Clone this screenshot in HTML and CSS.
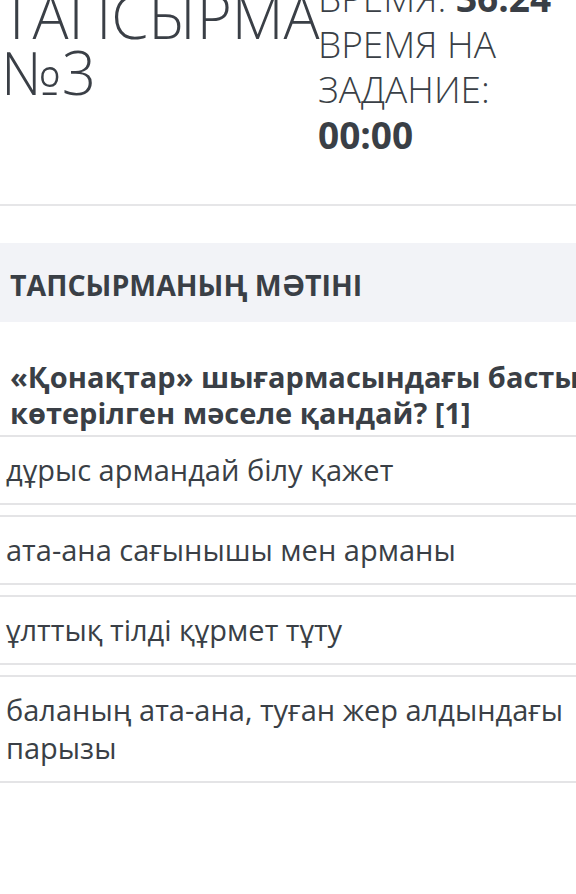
FILE: index.html
```html
<!DOCTYPE html>
<html>
    <head>
        <meta charset="UTF-8">
        <title>Тапсырма №3</title>
        <link rel="stylesheet" href="styles.css">
    </head>

    <body>
        <div class="page">
            <div class="task-header">
                <h1 class="task-title">ТАПСЫРМА №3</h1>
                <div class="timer">
                    <div>ВРЕМЯ: <b>36:24</b></div>
                    <div>ВРЕМЯ НА ЗАДАНИЕ: <b>00:00</b></div>
                </div>
            </div>

            <div class="section-title">ТАПСЫРМАНЫҢ МӘТІНІ</div>

            <div class="question">
                «Қонақтар» шығармасындағы басты кейіпкер арқылы көтерілген мәселе қандай? [1]
            </div>

            <ul class="answers">
                <li class="answer">дұрыс армандай білу қажет</li>
                <li class="answer">ата-ана сағынышы мен арманы</li>
                <li class="answer">ұлттық тілді құрмет тұту</li>
                <li class="answer">баланың ата-ана, туған жер алдындағы парызы</li>
            </ul>
        </div>
    </body>
</html>
```

FILE: styles.css
```css
*, *::after, *::before {
    box-sizing: border-box;
}

body {
    margin: 0;
    font-family: 'Open Sans', 'DejaVu Sans', sans-serif;
    color: #3a3f46;
    background-color: white;
    overflow: hidden;
}

.page {
    margin-top: -25px; /* страница прокручена немного вниз */
}

.task-header {
    display: flex;
    align-items: flex-start;
    padding-bottom: 47px;
    border-bottom: 2px solid #e6e6e8;
}

.task-title {
    margin: 13px 0 0 0;
    padding-left: 1px;
    width: 318px;
    flex-shrink: 0;
    font-size: 60px;
    line-height: 56px;
    font-weight: 300;
}

.timer {
    font-size: 37px;
    line-height: 45.5px;
    font-weight: 300;
    width: 258px;
}

.timer b {
    font-weight: 700;
}

.section-title {
    margin-top: 37px;
    height: 79px;
    padding: 4px 10px 0 10px;
    display: flex;
    align-items: center;
    background-color: #f2f3f7;
    font-size: 28.5px;
    font-weight: 700;
}

/* вопрос шире экрана, его конец обрезан справа */
.question {
    width: 900px;
    padding: 37px 10px 4px 10px;
    font-size: 29px;
    line-height: 36px;
    font-weight: 700;
}

.answers {
    list-style: none;
    margin: 0;
    padding: 0;
    width: 576px;
    display: flex;
    flex-direction: column;
    gap: 10px;
}

.answer {
    padding: 14px 6px;
    border-top: 2px solid #e4e4e6;
    border-bottom: 2px solid #e4e4e6;
    font-size: 29px;
    line-height: 38px;
}
```
